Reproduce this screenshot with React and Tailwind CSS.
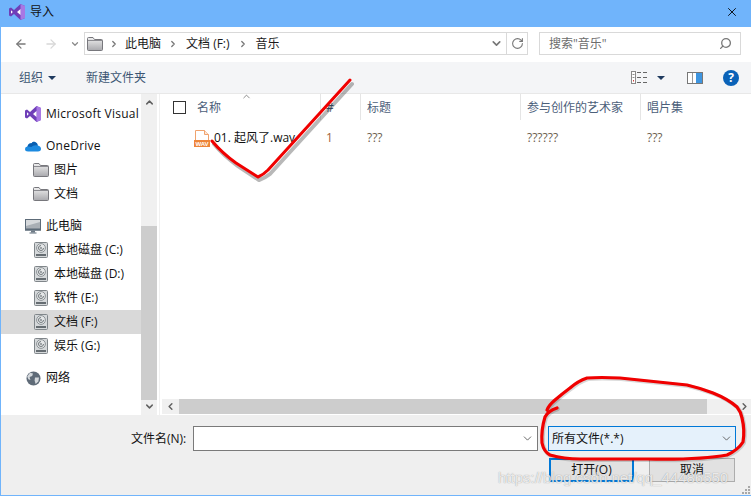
import { ChevronDown, ChevronUp, ChevronLeft, ChevronRight, ArrowLeft, ArrowRight, RotateCw, Search, X } from "lucide-react";

const FONT = "[font-family:'Open_Sans','Noto_Sans_CJK_SC',sans-serif]";

function VsLogo({ size = 16 }) {
  return (
    <svg width={size} height={size} viewBox="0 0 16 16">
      <path d="M11.5 0 L16 2 V14 L11.5 16 L5 10 L2 12.4 L0 11.4 V4.6 L2 3.6 L5 6 Z" fill="#6f3fb8" />
      <path d="M11.5 0 L16 2 V14 L11.5 16 Z" fill="#a878e4" />
      <path d="M11.5 5 L8 8 L11.5 11 Z M2 6.2 V9.8 L3.8 8 Z" fill="#fff" />
    </svg>
  );
}

function Folder() {
  return (
    <svg width="16" height="14" viewBox="0 0 16 14">
      <defs>
        <linearGradient id="fold" x1="0" y1="0" x2="0" y2="1">
          <stop offset="0" stopColor="#efefef" />
          <stop offset="1" stopColor="#a9a9ad" />
        </linearGradient>
      </defs>
      <path d="M0.5 3 V1.5 Q0.5 0.5 1.5 0.5 H6 L7.5 2.5 H14.5 Q15.5 2.5 15.5 3.5 V12.5 Q15.5 13.5 14.5 13.5 H1.5 Q0.5 13.5 0.5 12.5 Z" fill="url(#fold)" stroke="#77777c" />
      <path d="M1 3.5 H15" stroke="#8b8b90" />
    </svg>
  );
}

function Drive() {
  return (
    <svg width="14" height="16" viewBox="0 0 14 16">
      <rect x="0.5" y="0.5" width="13" height="15" rx="1" fill="#d5d8da" stroke="#80868a" />
      <circle cx="7" cy="6" r="4.4" fill="#e4e6e7" stroke="#8d9397" />
      <path d="M9.5 6 A2.5 2.5 0 1 1 7 3.5" fill="none" stroke="#6f767a" />
      <circle cx="7" cy="6" r="0.9" fill="#7b8185" />
      <rect x="2" y="12" width="10" height="2" fill="#666d72" />
    </svg>
  );
}

function Monitor() {
  return (
    <svg width="16" height="15" viewBox="0 0 16 15">
      <rect x="0.5" y="0.5" width="15" height="10.5" fill="#d6d9dc" stroke="#5d6b78" />
      <path d="M1 7 L15 3 V10.5 H1 Z" fill="#a9afb5" />
      <rect x="0" y="9.5" width="16" height="2" fill="#5d6b78" />
      <rect x="6" y="11.5" width="4" height="2" fill="#6d7a86" />
      <rect x="4.5" y="13.5" width="7" height="1" fill="#5d6b78" />
    </svg>
  );
}

function Globe() {
  return (
    <svg width="15" height="15" viewBox="0 0 15 15">
      <circle cx="7.5" cy="7.5" r="7" fill="#5f6b78" />
      <path d="M4 1.8 L7 2.6 L6.2 5 L3.6 6 L4.4 9 L2.4 8.2 L1.2 5.6 Z M9 6.4 L13 6.6 L12.4 10.6 L9.6 13 L8.6 9.6 Z" fill="#d5d9dd" />
    </svg>
  );
}

function Cloud() {
  return (
    <svg width="16" height="11" viewBox="0 0 16 11">
      <path d="M3 10.5 Q0 10.5 0 8 Q0 6 2.4 5.6 Q3.4 2 6.6 2.2 Q8 0.4 10 1 Q12.6 1.6 12.8 4.4 Q16 5 16 7.8 Q16 10.5 13 10.5 Z" fill="#1c8ae0" />
      <path d="M2.4 5.6 Q3.4 2 6.6 2.2 Q8 0.4 10 1 Q12.6 1.6 12.8 4.4 Q8 3.6 6.4 6 Q4 5.2 2.4 5.6 Z" fill="#0a5fb0" />
    </svg>
  );
}

function WavIcon() {
  return (
    <svg width="16" height="17" viewBox="0 0 16 17">
      <path d="M1.5 0.5 H10.5 L14.5 4.5 V11 H1.5 Z" fill="#fff" stroke="#f0a36e" />
      <path d="M10.5 0.5 V4.5 H14.5" fill="#fde6d6" stroke="#f0a36e" />
      <rect x="0" y="10" width="16" height="7" fill="#ee8539" />
      <text x="8" y="15.6" fontSize="6" fontWeight="700" textAnchor="middle" fill="#fff" fontFamily="Liberation Sans, sans-serif">WAV</text>
    </svg>
  );
}

function ViewIcon() {
  return (
    <svg width="17" height="13" viewBox="0 0 17 13">
      <rect x="0.5" y="0.5" width="4" height="12" fill="#fff" stroke="#8a8a8a" />
      <path d="M1.5 3.5 H3.5 M1.5 6.5 H3.5" stroke="#8a8a8a" />
      <rect x="2" y="9" width="1" height="1.5" fill="#d04040" />
      <path d="M6 1.5 H10 M12 1.5 H16 M6 6.5 H10 M12 6.5 H16 M6 11.5 H10 M12 11.5 H16" stroke="#666" />
    </svg>
  );
}

function PaneIcon() {
  return (
    <svg width="16" height="12" viewBox="0 0 16 12">
      <rect x="0.5" y="0.5" width="15" height="11" fill="#fff" stroke="#777" />
      <rect x="9" y="1" width="6" height="10" fill="#3e95e0" />
      <path d="M5.5 1 V11" stroke="#999" />
    </svg>
  );
}

function Caret({ color = "border-t-[#1f3a5f]" }) {
  return <span className={`inline-block w-0 h-0 border-x-[4px] border-x-transparent border-t-[4px] ${color}`} />;
}

function Crumb({ className, children }) {
  return (
    <>
      <ChevronRight size={10} strokeWidth={3} className="text-[#777] ml-[5px]" />
      <span className={`text-[#1a1a1a] ${className}`}>{children}</span>
    </>
  );
}

function NavRow({ icon, label, indent, selected, wide }) {
  return (
    <div className={`h-6 flex items-center whitespace-nowrap overflow-hidden text-[#111] ${indent ? "pl-[32px] gap-[5px]" : "pl-[24px] gap-[5px]"} ${selected ? "bg-[#d9d9d9]" : ""}`}>
      <span className="w-[16px] flex justify-center shrink-0">{icon}</span>
      <span className={wide ? "tracking-[0.25px]" : ""}>{label}</span>
    </div>
  );
}

function HeaderCell({ className, children }) {
  return <div className={`h-[26px] pt-[2px] flex items-center border-r border-[#e5e5e5] text-[#4c607a] ${className}`}>{children}</div>;
}

export default function App() {
  return (
    <div className={`w-[751px] h-[496px] relative overflow-hidden flex flex-col bg-[#70b4fb] border-l border-b border-[#70b4fb] text-[12px] ${FONT}`}>
      {/* title bar */}
      <div className="h-[27px] shrink-0 flex items-center pl-2 pr-3 pb-1 text-[#111]">
        <VsLogo />
        <span className="ml-[5px]">导入</span>
        <X size={14} strokeWidth={1.5} className="ml-auto text-black" />
      </div>

      {/* address row */}
      <div className="h-[35px] shrink-0 bg-white flex items-center pb-[2px]">
        <ArrowLeft size={14} strokeWidth={2.2} className="ml-[13px] text-[#7a7a7a]" />
        <ArrowRight size={14} strokeWidth={2.2} className="ml-[16px] text-[#d8d8d8]" />
        <ChevronDown size={10} strokeWidth={3} className="ml-[12px] text-[#8a8a8a]" />
        <div className="ml-[4px] w-[444px] h-[23px] flex items-center border border-[#d9d9d9]">
          <span className="ml-[2px] mr-[1px]"><Folder /></span>
          <Crumb className="ml-[6px] mr-[2px]">此电脑</Crumb>
          <Crumb className="ml-[8px] mr-[3px]">文档 (F:)</Crumb>
          <Crumb className="ml-[8px]">音乐</Crumb>
          <ChevronDown size={13} strokeWidth={3} className="ml-auto mr-[3px] text-[#777]" />
          <div className="w-[21px] h-full border-l border-[#d9d9d9] flex items-center justify-center">
            <RotateCw size={13} strokeWidth={2} className="text-[#777]" />
          </div>
        </div>
        <div className="ml-[11px] w-[202px] h-[23px] flex items-center border border-[#d9d9d9] pl-[9px] pr-2 text-[#6d6d6d]">
          <span>搜索"音乐"</span>
          <Search size={13} strokeWidth={2.4} className="ml-auto -scale-x-100 text-[#777]" />
        </div>
      </div>

      {/* toolbar */}
      <div className="h-[32px] shrink-0 bg-[#f4f5f7] border-b border-[#e8e8e8] flex items-center text-[#3c5573]">
        <span className="ml-[18px]">组织</span>
        <span className="ml-[5px] flex"><Caret /></span>
        <span className="ml-[30px]">新建文件夹</span>
        <span className="ml-auto"><ViewIcon /></span>
        <span className="ml-[9px] mr-[22px] flex"><Caret /></span>
        <PaneIcon />
        <span className="ml-[20px] mr-[12px] w-4 h-4 rounded-full bg-[#0a62b8] text-white font-bold text-[12px] leading-4 text-center">?</span>
      </div>

      {/* body */}
      <div className="flex-1 min-h-0 bg-white flex">
        {/* nav pane */}
        <div className="w-[140px] shrink-0 pt-2 flex flex-col">
          <NavRow wide icon={<VsLogo />} label="Microsoft Visual" />
          <div className="mt-2" />
          <NavRow wide icon={<Cloud />} label="OneDrive" />
          <NavRow indent icon={<Folder />} label="图片" />
          <NavRow indent icon={<Folder />} label="文档" />
          <div className="mt-2" />
          <NavRow icon={<Monitor />} label="此电脑" />
          <NavRow indent icon={<Drive />} label="本地磁盘 (C:)" />
          <NavRow indent icon={<Drive />} label="本地磁盘 (D:)" />
          <NavRow indent icon={<Drive />} label="软件 (E:)" />
          <NavRow indent selected icon={<Drive />} label="文档 (F:)" />
          <NavRow indent icon={<Drive />} label="娱乐 (G:)" />
          <div className="mt-2" />
          <NavRow icon={<Globe />} label="网络" />
        </div>
        {/* nav scrollbar */}
        <div className="w-[16px] shrink-0 bg-[#f0f0f0] flex flex-col items-center">
          <ChevronUp size={11} strokeWidth={3.2} className="mt-[3px] text-[#606060]" />
          <div className="mt-[118px] w-full h-[174px] bg-[#cdcdcd]" />
          <ChevronDown size={11} strokeWidth={3.2} className="mt-[1px] text-[#606060]" />
        </div>
        <div className="w-[3px] shrink-0 border-r border-[#f0f0f0]" />

        {/* file list */}
        <div className="flex-1 min-w-0 flex flex-col">
          <div className="flex items-center">
            <HeaderCell className="w-[161px] pl-[13px] gap-[11px]">
              <span className="w-[13px] h-[13px] border border-[#333] shrink-0 -mt-[2px]" />
              <span>名称</span>
            </HeaderCell>
            <HeaderCell className="w-[40px] pl-[5px]">#</HeaderCell>
            <HeaderCell className="w-[160px] pl-[6px]">标题</HeaderCell>
            <HeaderCell className="w-[120px] pl-[6px]">参与创作的艺术家</HeaderCell>
            <div className="pl-[6px] pt-[2px] text-[#4c607a]">唱片集</div>
          </div>
          <div className="h-[24px] mt-[6px] flex items-center whitespace-nowrap text-[#6d5f50]">
            <div className="w-[161px] pl-[34px] flex items-center gap-[4px] text-[#111]">
              <WavIcon />
              <span>01. 起风了.wav</span>
            </div>
            <div className="w-[40px] pl-[9px] -ml-[4px] mr-[4px] text-[#a0633a]">1</div>
            <div className="w-[160px] pl-[6px]">???</div>
            <div className="w-[120px] pl-[6px]">??????</div>
            <div className="pl-[6px]">???</div>
          </div>
          {/* horizontal scrollbar */}
          <div className="mt-auto mb-px ml-[2px] h-[15px] bg-[#f0f0f0] flex items-center">
            <div className="w-[17px] flex justify-center"><ChevronLeft size={11} strokeWidth={3.2} className="text-[#606060]" /></div>
            <div className="w-[528px] h-full bg-[#cdcdcd]" />
            <ChevronRight size={11} strokeWidth={3.2} className="ml-auto mr-[1px] text-[#606060]" />
          </div>
        </div>
      </div>

      {/* bottom bar */}
      <div className="h-[80px] shrink-0 bg-[#efefef] relative">
        <div className="pt-[11px] flex items-start">
          <span className="ml-[130px] mt-[4px] w-[62px] whitespace-nowrap text-[#111]">文件名(N):</span>
          <div className="w-[345px] h-[25px] bg-white border border-[#7a7a7a] flex items-center justify-end pr-[3px]">
            <ChevronDown size={13} strokeWidth={1.6} className="text-[#555]" />
          </div>
          <div className="ml-[10px] w-[188px] h-[25px] bg-[#e5f1fb] border border-[#0078d7] flex items-center pl-[3px] pr-[2px] text-[#111]">
            <span>所有文件(*.*)</span>
            <ChevronDown size={13} strokeWidth={1.6} className="ml-auto text-[#555]" />
          </div>
        </div>
        <div className="mt-[7px] flex text-[#111]">
          <div className="ml-[548px] w-[85px] h-[24px] bg-[#e1e1e1] border-2 border-[#0078d7] flex items-center justify-center">打开(O)</div>
          <div className="ml-[15px] w-[86px] h-[24px] bg-[#e1e1e1] border border-[#adadad] flex items-center justify-center">取消</div>
        </div>
      </div>

      {/* sort arrow sits on top of the header edge */}
      <ChevronUp size={11} strokeWidth={1.6} className="absolute left-[240px] top-[91px] text-[#666]" />

      {/* resize grip */}
      <svg width="8" height="8" viewBox="0 0 8 8" className="absolute right-[1px] bottom-[1px]">
        <path d="M6 0h2v2H6zM3 3h2v2H3zM6 3h2v2H6zM0 6h2v2H0zM3 6h2v2H3zM6 6h2v2H6z" fill="#a8a8a8" />
      </svg>

      {/* hand drawn red marks */}
      <svg width="751" height="496" viewBox="0 0 751 496" className="absolute left-[-1px] top-0 pointer-events-none" fill="none" strokeLinecap="round" strokeLinejoin="round">
        <path d="M352 84 L270 174 Q265 178 259 180 L238 166 Q224 156 214 144" stroke="#000" strokeOpacity="0.28" strokeWidth="4" />
        <path d="M350 80 L268 170 Q263 175 258 177 L236 163 Q222 153 212 141" stroke="#f00000" strokeWidth="3" />
        <path d="M557 408 Q548 411 545 417 Q541 430 542 443 Q544 452 550 455 Q564 459 580 459 L647 459 Q700 460 727 455 Q738 450 743 442 Q745 430 742 418 Q741 412 737 407 Q728 399 713 393 Q700 388 687 385 Q650 381 620 378 Q600 377 587 378 Q578 381 570 388 Q562 394 555 400 Q549 405 547 410" stroke="#000" strokeOpacity="0.15" strokeWidth="4" transform="translate(1 1)" />
        <path d="M557 408 Q548 411 545 417 Q541 430 542 443 Q544 452 550 455 Q564 459 580 459 L647 459 Q700 460 727 455 Q738 450 743 442 Q745 430 742 418 Q741 412 737 407 Q728 399 713 393 Q700 388 687 385 Q650 381 620 378 Q600 377 587 378 Q578 381 570 388 Q562 394 555 400 Q549 405 547 410" stroke="#f00000" strokeWidth="3.2" />
      </svg>

      {/* watermark */}
      <span className="absolute left-[497px] top-[469px] text-[15px] leading-[18px] whitespace-nowrap text-white/80 [font-family:'Liberation_Sans',sans-serif] [text-shadow:0_0_1px_rgba(90,90,90,0.7)]">https://blog.csdn.net/qq_44486550</span>
    </div>
  );
}
